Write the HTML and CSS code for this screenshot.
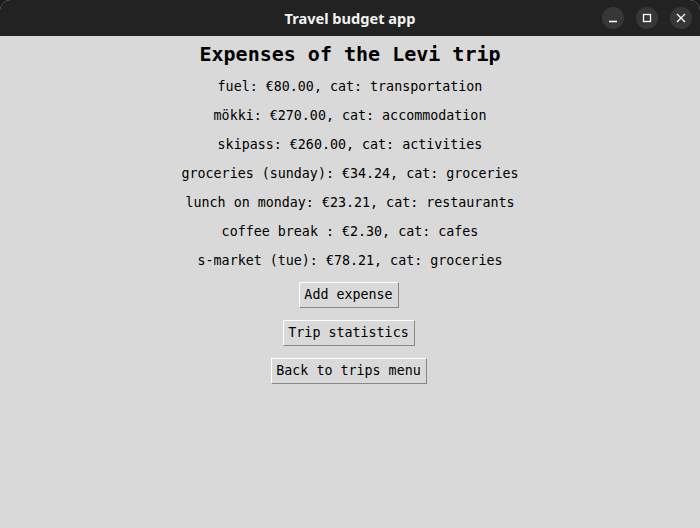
FILE: index.html
```html
<!DOCTYPE html>
<html>
<head>
<meta charset="utf-8">
<link rel="stylesheet" href="styles.css">
</head>
<body>
<div class="window">
  <header class="titlebar">
    <span class="title">Travel budget app</span>
    <div class="controls">
      <span class="ctl"><svg width="10" height="10" viewBox="0 0 10 10"><path d="M1 8.5h8" stroke="#fff" stroke-width="1.3"/></svg></span>
      <span class="ctl"><svg width="10" height="10" viewBox="0 0 10 10"><rect x="1.5" y="1.5" width="7" height="7" fill="none" stroke="#fff" stroke-width="1.3"/></svg></span>
      <span class="ctl"><svg width="10" height="10" viewBox="0 0 10 10"><path d="M1 1l8 8M9 1l-8 8" stroke="#fff" stroke-width="1.3"/></svg></span>
    </div>
  </header>
  <main class="content">
    <h1 class="heading">Expenses of the Levi trip</h1>
    <p class="item">fuel: €80.00, cat: transportation</p>
    <p class="item">mökki: €270.00, cat: accommodation</p>
    <p class="item">skipass: €260.00, cat: activities</p>
    <p class="item">groceries (sunday): €34.24, cat: groceries</p>
    <p class="item">lunch on monday: €23.21, cat: restaurants</p>
    <p class="item">coffee break : €2.30, cat: cafes</p>
    <p class="item">s-market (tue): €78.21, cat: groceries</p>
    <div class="btnrow"><button class="btn">Add expense</button></div>
    <div class="btnrow"><button class="btn">Trip statistics</button></div>
    <div class="btnrow"><button class="btn">Back to trips menu</button></div>
  </main>
</div>
</body>
</html>
```
FILE: styles.css
```css
html, body {
  margin: 0;
  padding: 0;
  background: #1a1a1a;
}
.window {
  width: 700px;
  height: 528px;
  display: flex;
  flex-direction: column;
  background: #d9d9d9;
  border-radius: 10px 10px 0 0;
  overflow: hidden;
}
.titlebar {
  height: 36px;
  flex: 0 0 36px;
  background: #222222;
  display: flex;
  align-items: center;
  justify-content: center;
  position: relative;
}
.title {
  font-family: "Noto Sans", "DejaVu Sans", sans-serif;
  font-weight: bold;
  font-size: 14.6px;
  color: #f2f2f2;
}
.controls {
  position: absolute;
  right: 8px;
  top: 7px;
  display: flex;
  gap: 12px;
}
.ctl {
  width: 22px;
  height: 22px;
  border-radius: 50%;
  background: #373737;
  display: flex;
  align-items: center;
  justify-content: center;
}
.content {
  display: flex;
  flex-direction: column;
  align-items: center;
  font-family: "DejaVu Sans Mono", monospace;
  color: #000;
}
.heading {
  margin: 0;
  height: 36px;
  line-height: 37px;
  font-size: 20px;
  font-weight: bold;
}
.item {
  margin: 0;
  height: 29px;
  line-height: 29px;
  font-size: 13.33px;
}
.btnrow {
  box-sizing: border-box;
  height: 38px;
  display: flex;
  align-items: center;
  padding-top: 2px;
}
.btn {
  font-family: "DejaVu Sans Mono", monospace;
  font-size: 13.33px;
  line-height: 16px;
  color: #000;
  background: #d9d9d9;
  padding: 4px 5px 4px 4px;
  margin: 0 2px 0 0;
  border: 1px solid;
  border-color: #ffffff #888888 #888888 #ffffff;
  border-radius: 0;
}
```
